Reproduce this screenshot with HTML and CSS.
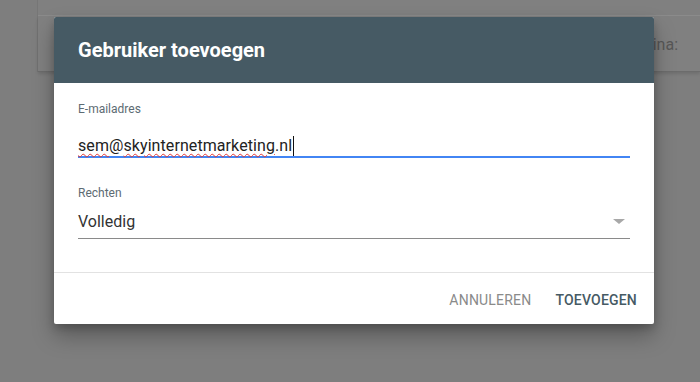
FILE: index.html
```html
<!DOCTYPE html>
<html lang="nl">
<head>
<meta charset="utf-8">
<title>Gebruiker toevoegen</title>
<link rel="stylesheet" href="styles.css">
</head>
<body>
<div class="page">
  <div class="card">
    <div class="card-top"></div>
    <div class="card-row"><span class="rows-label">Rijen per pagina:</span></div>
  </div>
</div>

<div class="dialog" role="dialog" aria-labelledby="dlg-title">
  <div class="dialog-header">
    <h2 id="dlg-title" class="dialog-title">Gebruiker toevoegen</h2>
  </div>
  <div class="dialog-body">
    <div class="field">
      <div class="field-label">E-mailadres</div>
      <div class="field-input focused"><span class="misspelled">sem</span>@<span class="misspelled">skyinternetmarketing</span>.nl<span class="caret"></span></div>
    </div>
    <div class="field field-select">
      <div class="field-label">Rechten</div>
      <div class="field-input select">Volledig<span class="arrow"></span></div>
    </div>
  </div>
  <div class="dialog-footer">
    <span class="btn btn-cancel">ANNULEREN</span>
    <span class="btn btn-primary">TOEVOEGEN</span>
  </div>
</div>
</body>
</html>
```

FILE: styles.css
```css
html, body {
  margin: 0;
  padding: 0;
}

body {
  width: 700px;
  height: 382px;
  overflow: hidden;
  background: #7e7e7e;
  font-family: Roboto, "Liberation Sans", Arial, sans-serif;
  position: relative;
}

.page {
  padding-left: 37px;
}

.card {
  border-left: 1px solid #767676;
  background: #808080;
}

.card-top {
  height: 15px;
  border-bottom: 1px solid #8c8c8c;
}

.card-row {
  height: 56px;
  border-bottom: 1px solid #6c6c6c;
  box-shadow: 0 2px 3px rgba(0, 0, 0, 0.12);
  display: flex;
  align-items: center;
  justify-content: flex-end;
  padding-right: 22px;
  box-sizing: border-box;
}

.rows-label {
  font-size: 16px;
  color: #575757;
  padding-top: 2px;
}

.dialog {
  position: absolute;
  left: 54px;
  top: 17px;
  width: 600px;
  background: #ffffff;
  border-radius: 2px;
  box-shadow: 0 12px 22px rgba(0, 0, 0, 0.28), 0 4px 8px rgba(0, 0, 0, 0.18);
  overflow: hidden;
}

.dialog-header {
  background: #465a64;
  height: 66px;
  display: flex;
  align-items: center;
  padding: 0 24px;
}

.dialog-title {
  margin: 0;
  font-size: 20px;
  font-weight: 700;
  color: #ffffff;
  letter-spacing: 0;
  padding-bottom: 1px;
}

.dialog-body {
  padding: 18px 24px 33px;
  border-bottom: 1px solid #e2e2e2;
}

.field-label {
  font-size: 12px;
  line-height: 16px;
  color: #5d6b73;
}

.field-input {
  font-size: 16px;
  line-height: 20px;
  color: #222222;
  position: relative;
}

.field-input.focused {
  margin-top: 19px;
  padding-bottom: 0;
  letter-spacing: 0.08px;
  border-bottom: 2px solid #4285f4;
}

.misspelled {
  text-decoration: underline wavy #e53935;
  text-decoration-thickness: 1px;
  text-underline-offset: 2px;
}

.caret {
  display: inline-block;
  width: 1px;
  height: 20px;
  background: #111111;
  vertical-align: top;
  margin-left: 1px;
}

.field-select {
  margin-top: 27px;
}

.field-input.select {
  margin-top: 11px;
  padding-bottom: 6px;
  border-bottom: 1px solid #8a8a8a;
  color: #333333;
}

.arrow {
  position: absolute;
  right: 5px;
  top: 7px;
  width: 0;
  height: 0;
  border-left: 6px solid transparent;
  border-right: 6px solid transparent;
  border-top: 5px solid #a8a8a8;
}

.dialog-footer {
  height: 51px;
  display: flex;
  align-items: center;
  justify-content: flex-end;
  gap: 24px;
  padding-right: 17px;
}

.btn {
  font-size: 14px;
  line-height: 16px;
  letter-spacing: 0.2px;
  padding-top: 3px;
}

.btn-cancel {
  color: #8a8a8a;
}

.btn-primary {
  color: #465a64;
  font-weight: 500;
}
```
